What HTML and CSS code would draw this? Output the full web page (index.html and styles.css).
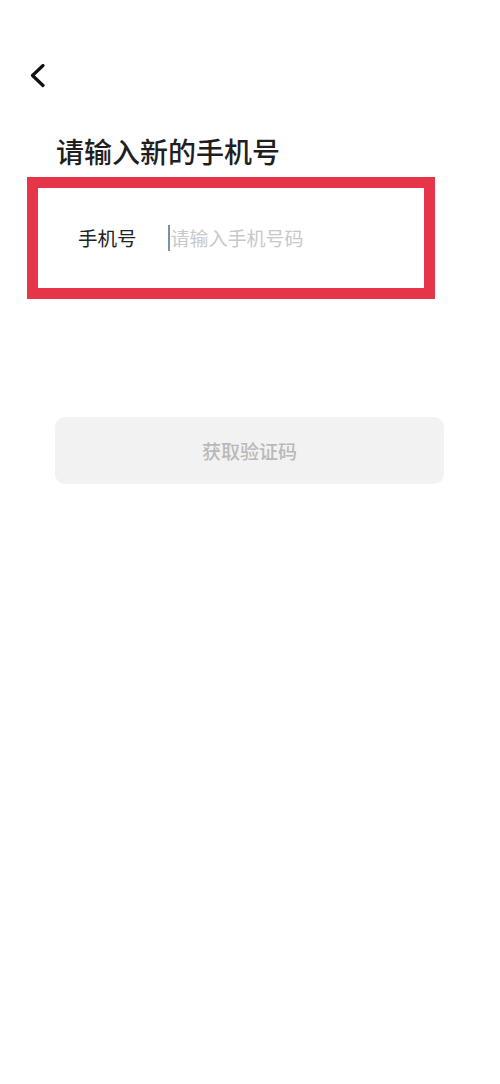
FILE: index.html
```html
<!DOCTYPE html>
<html lang="zh">
<head>
<meta charset="utf-8">
<link rel="stylesheet" href="styles.css">
</head>
<body>
<div class="page">
  <div class="top">
    <svg class="back" width="16" height="24" viewBox="0 0 16 24"><path d="M13 1.5 L2.5 11.5 L13 21.5" fill="none" stroke="#111" stroke-width="3.2" stroke-linecap="round" stroke-linejoin="round"/></svg>
  </div>
  <h1 class="title">请输入新的手机号</h1>
  <div class="box">
    <div class="row">
      <span class="label">手机号</span>
      <span class="caret"></span>
      <span class="placeholder">请输入手机号码</span>
    </div>
  </div>
  <div class="btn">获取验证码</div>
</div>
</body>
</html>
```
FILE: styles.css
```css
html, body { margin: 0; padding: 0; background: #fff; }
body { font-family: "Noto Sans CJK SC", "Noto Sans", sans-serif; }
.page { width: 500px; }
.top { padding: 64px 0 0 30px; height: 24px; }
.back { display: block; }
.title {
  margin: 43px 0 0 56px;
  font-size: 28px;
  line-height: 40px;
  font-weight: 500;
  color: #1f1f1f;
}
.box {
  margin: 6px 0 0 27px;
  width: 386px;
  height: 100px;
  border: 11px solid #e63549;
  display: flex;
  align-items: center;
}
.row { display: flex; align-items: center; padding-left: 40px; }
.label { font-size: 19.5px; color: #222; line-height: 26px; }
.caret { width: 2px; height: 26px; background: #7d8fa3; margin-left: 31px; }
.placeholder { font-size: 19px; color: #c8c8c8; line-height: 26px; margin-left: 1px; }
.btn {
  margin: 118px 0 0 55px;
  width: 389px;
  height: 67px;
  border-radius: 10px;
  background: #f2f2f2;
  color: #b9b9b9;
  font-size: 19px;
  font-weight: 500;
  display: flex;
  align-items: center;
  justify-content: center;
}
```
